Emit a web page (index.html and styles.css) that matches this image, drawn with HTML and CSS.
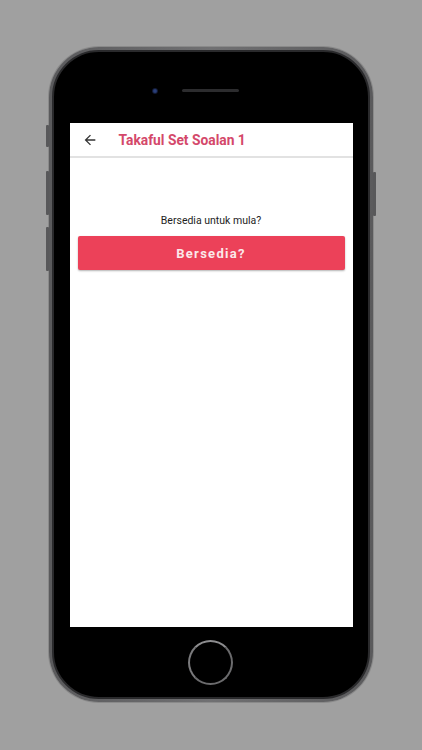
FILE: index.html
```html
<!DOCTYPE html>
<html>
<head>
<meta charset="utf-8">
<link rel="stylesheet" href="styles.css">
</head>
<body>
<div class="phone">
  <span class="side-btn mute"></span>
  <span class="side-btn vol-up"></span>
  <span class="side-btn vol-down"></span>
  <span class="side-btn power"></span>
  <div class="body">
    <div class="top-bezel">
      <span class="camera"></span>
      <span class="speaker"></span>
    </div>
    <div class="screen">
      <div class="appbar">
        <svg class="back" width="16" height="16" viewBox="0 0 24 24"><path d="M20 11H7.83l5.59-5.59L12 4l-8 8 8 8 1.41-1.41L7.83 13H20v-2z" fill="#333"/></svg>
        <span class="title">Takaful Set Soalan 1</span>
      </div>
      <div class="content">
        <p class="prompt">Bersedia untuk mula?</p>
        <button class="ready">Bersedia?</button>
      </div>
    </div>
    <div class="bottom-bezel">
      <span class="home"></span>
    </div>
  </div>
</div>
</body>
</html>
```
FILE: styles.css
```css
html, body {
  margin: 0;
  padding: 0;
  background: #a0a0a0;
  width: 422px;
  height: 750px;
  overflow: hidden;
  font-family: Roboto, "Liberation Sans", sans-serif;
}
body {
  padding-top: 47px;
  padding-left: 49px;
  box-sizing: border-box;
}
.phone {
  position: relative;
  width: 324px;
  height: 655px;
  border-radius: 50px;
  background: linear-gradient(90deg, #5a5a5c, #707072 50%, #5a5a5c);
  padding: 3px;
  box-sizing: border-box;
  box-shadow: 0 0 0 1px #8a8a8a;
}
.body {
  width: 100%;
  height: 100%;
  border-radius: 47px;
  background: #000;
  border: 2px solid #2a2a2c;
  box-sizing: border-box;
  display: flex;
  flex-direction: column;
  align-items: center;
}
.top-bezel {
  height: 71px;
  width: 100%;
  display: flex;
  justify-content: center;
  align-items: center;
  gap: 24px;
  padding-top: 6px;
  padding-right: 32px;
  box-sizing: border-box;
}
.camera {
  width: 6px;
  height: 6px;
  border-radius: 50%;
  background: radial-gradient(circle, #2a3f7a 0 30%, #121a35 60%, #05070f);
}
.speaker {
  width: 57px;
  height: 3px;
  border-radius: 2px;
  background: #2c2c2e;
}
.screen {
  width: 283px;
  height: 504px;
  background: #fff;
  display: flex;
  flex-direction: column;
}
.appbar {
  height: 35px;
  display: flex;
  align-items: center;
  border-bottom: 2px solid #e2e2e2;
  box-sizing: border-box;
  padding-left: 12px;
}
.back {
  display: block;
}
.title {
  margin-left: 21px;
  color: #d4486a;
  font-weight: 700;
  font-size: 13.8px;
}
.content {
  display: flex;
  flex-direction: column;
  align-items: center;
  padding: 0 8px;
}
.prompt {
  margin: 56px 0 0;
  font-size: 10.5px;
  color: #1e1e1e;
  line-height: 14px;
}
.ready {
  margin-top: 8px;
  width: 267px;
  height: 34px;
  border: none;
  border-radius: 2px;
  background: #ec4159;
  color: #fbe8ea;
  font-family: Roboto, "Liberation Sans", sans-serif;
  font-weight: 700;
  font-size: 13px;
  letter-spacing: 1.3px;
  box-shadow: 0 1px 2px rgba(0,0,0,0.3);
}
.bottom-bezel {
  flex: 1;
  width: 100%;
  display: flex;
  justify-content: center;
  padding-top: 13px;
  padding-right: 2px;
  box-sizing: border-box;
}
.home {
  width: 41px;
  height: 41px;
  border-radius: 50%;
  border: 2px solid #6b6b6d;
  border-top-color: #8d8d8f;
  border-left-color: #7a7a7c;
}
.side-btn {
  position: absolute;
  width: 3px;
  background: #58585a;
  border-radius: 1px;
}
.mute { left: -3px; top: 78px; height: 22px; }
.vol-up { left: -3px; top: 124px; height: 44px; }
.vol-down { left: -3px; top: 180px; height: 44px; }
.power { right: -3px; top: 125px; height: 44px; }
```
